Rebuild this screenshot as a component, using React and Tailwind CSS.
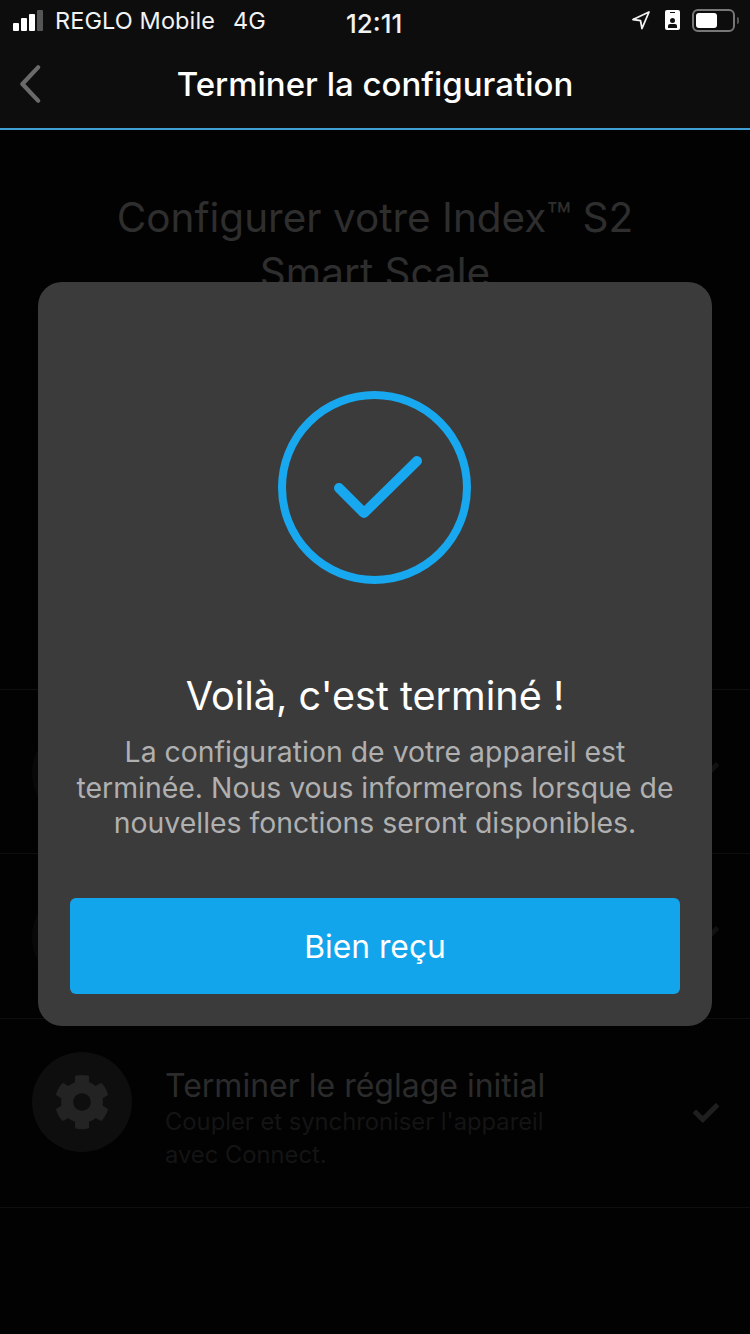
import React from 'react';
import { FaCheck, FaCog } from 'react-icons/fa';

const SANS = "font-['Inter',sans-serif]";

const ROWS = [
  { id: 'device', height: 'h-[164px]' },
  { id: 'users', height: 'h-[165px]' },
  {
    id: 'setup',
    height: 'h-[189px]',
    title: 'Terminer le réglage initial',
    lines: ["Coupler et synchroniser l'appareil", 'avec Connect.'],
  },
];

const StatusBar = () => (
  <div className="h-[40px] relative flex items-center pl-[13px] pr-[11px] text-[#f2f2f2]">
    <div className="flex items-end gap-[2px] h-[21px] mr-[12px]">
      <span className="w-[6px] h-[8px] bg-white rounded-[1px]" />
      <span className="w-[6px] h-[13px] bg-white rounded-[1px]" />
      <span className="w-[6px] h-[17px] bg-white rounded-[1px]" />
      <span className="w-[6px] h-[21px] bg-[#555] rounded-[1px]" />
    </div>
    <span className="text-[23.5px] tracking-[0.1px] pt-[2px]">REGLO Mobile</span>
    <span className="text-[23.5px] ml-[18px] pt-[2px]">4G</span>
    <span className="absolute left-[346px] top-[4px] text-[26px] font-medium">12:11</span>
    <div className="ml-auto flex items-center gap-[14px]">
      <svg width="20" height="20" viewBox="0 0 20 20" fill="none" stroke="#f2f2f2" strokeWidth="1.8" strokeLinejoin="round">
        <path d="M18 2 2 9.5l7.5 1.2L11 18.5z" />
      </svg>
      <div className="relative w-[15px] h-[20px] bg-white rounded-[2px] flex flex-col items-center justify-end pb-[2px]">
        <span className="absolute top-[2px] w-[5px] h-[1px] bg-[#111]" />
        <span className="w-[5px] h-[5px] rounded-full bg-[#111]" />
        <span className="w-[9px] h-[4px] mt-[1px] bg-[#111] rounded-t-[2px]" />
      </div>
      <div className="flex items-center -ml-[2px]">
        <div className="w-[43px] h-[23px] border-2 border-[#777] rounded-[6px] p-[2px]">
          <div className="w-[21px] h-full bg-white rounded-[3px]" />
        </div>
        <span className="w-[2px] h-[7px] ml-[2px] bg-[#555] rounded-r-[2px]" />
      </div>
    </div>
  </div>
);

const Row = ({ height, title, lines = [] }) => (
  <div className={`${height} border-b border-[#0e0e0e] flex items-center pl-[32px] pr-[31px]`}>
    <div className={`self-start mt-[33px] w-[100px] h-[100px] rounded-full flex items-center justify-center shrink-0 ${title ? 'bg-[#0e0e0e]' : 'bg-[#080808]'}`}>
      {title && <FaCog size={56} color="#232323" />}
    </div>
    <div className="ml-[33px] mt-[12px] flex-1">
      {title && <div className="text-[32px] leading-[38px] text-[#2b2b2b]">{title}</div>}
      {lines.map((line) => (
        <div key={line} className="text-[23.75px] leading-[33px] text-[#141414]">{line}</div>
      ))}
    </div>
    <FaCheck size={26} color={title ? '#1f1f1f' : '#111111'} />
  </div>
);

const App = () => {
  return (
    <div className={`relative w-[750px] h-[1334px] overflow-hidden bg-[#020202] ${SANS}`}>
      <div className="bg-[#0d0d0e] border-b-2 border-[#3f9fd3] h-[130px]">
        <StatusBar />
        <div className="h-[88px] flex items-center pl-[19px] pr-[41px]">
          <svg width="22" height="38" viewBox="0 0 22 40" fill="none" stroke="#6a6a6a" strokeWidth="4.5" strokeLinecap="round" strokeLinejoin="round" className="shrink-0">
            <path d="M19.5 2.5 3 20l16.5 17.5" />
          </svg>
          <h1 className="flex-1 text-center text-[33px] pt-[2px] font-medium text-white">Terminer la configuration</h1>
        </div>
      </div>

      {/* Page under the dialog */}
      <div className="h-[559px] pt-[60px] text-center text-[40.5px] leading-[55px] text-[#2e2e2e]">
        <div>Configurer votre Index™ S2</div>
        <div>Smart Scale</div>
      </div>
      <div className="border-t border-[#0e0e0e]">
        {ROWS.map((row) => (
          <Row key={row.id} {...row} />
        ))}
      </div>

      {/* Dialog */}
      <div className="absolute left-[38px] top-[282px] w-[674px] h-[744px] rounded-[24px] bg-[#3b3b3c] flex flex-col items-center px-[32px] pt-[109px]">
        <svg width="193" height="193" viewBox="0 0 193 193" fill="none" stroke="#18a8ef" className="-ml-[2px]">
          <circle cx="96.5" cy="96.5" r="92.5" strokeWidth="8" />
          <path d="M61 97 86 122 139 70" strokeWidth="10" strokeLinecap="round" strokeLinejoin="round" />
        </svg>
        <h2 className="mt-[84px] text-[39.6px] leading-[56px] text-white">Voilà, c'est terminé !</h2>
        <p className="mt-[10px] text-[28.4px] leading-[35.5px] text-center text-[#b0b0b0] whitespace-nowrap">
          La configuration de votre appareil est
          <br />
          terminée. Nous vous informerons lorsque de
          <br />
          nouvelles fonctions seront disponibles.
        </p>
        <button className="mt-[57px] w-full h-[96px] pt-[2px] rounded-[6px] bg-[#12a5ec] text-[31.8px] text-white">
          Bien reçu
        </button>
      </div>
    </div>
  );
};

export default App;
